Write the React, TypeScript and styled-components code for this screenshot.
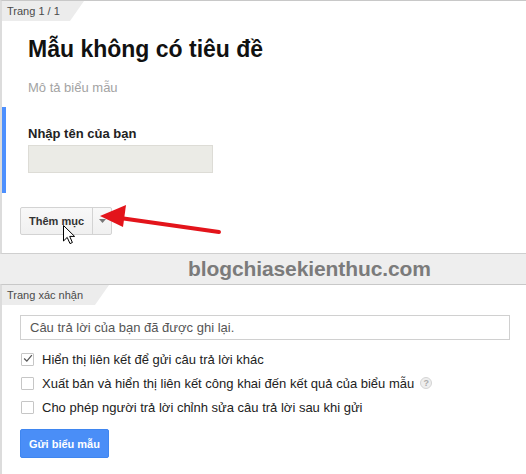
import styled, { createGlobalStyle } from "styled-components";

const GlobalStyle = createGlobalStyle`
  body {
    margin: 0;
    background: #fff;
    font-family: "Liberation Sans", Arial, sans-serif;
  }
  * { box-sizing: border-box; }
`;

const options = [
  { id: 1, label: "Hiển thị liên kết để gửi câu trả lời khác", checked: true },
  { id: 2, label: "Xuất bản và hiển thị liên kết công khai đến kết quả của biểu mẫu", checked: false, help: true },
  { id: 3, label: "Cho phép người trả lời chỉnh sửa câu trả lời sau khi gửi", checked: false },
];

export default function App() {
  return (
    <>
      <GlobalStyle />
      <Page>
        <Panel $bottom>
          <Tab $width={82}>Trang 1 / 1</Tab>
          <Header>
            <Title>Mẫu không có tiêu đề</Title>
            <Description>Mô tả biểu mẫu</Description>
          </Header>
          <Question>
            <Label>Nhập tên của bạn</Label>
            <NameInput />
          </Question>
          <Toolbar>
            <SplitButton>
              <MainPart>Thêm mục</MainPart>
              <Caret>
                <svg width="7" height="4" viewBox="0 0 7 4">
                  <path d="M0 0h7L3.5 4z" fill="#777" />
                </svg>
              </Caret>
            </SplitButton>
          </Toolbar>
        </Panel>

        <Band>
          <Watermark>blogchiasekienthuc.com</Watermark>
        </Band>

        <Panel>
          <Tab $width={107}>Trang xác nhận</Tab>
          <Confirm>
            <MessageBox>Câu trả lời của bạn đã được ghi lại.</MessageBox>
            <Options>
              {options.map((o) => (
                <Option key={o.id}>
                  <Box>
                    {o.checked && (
                      <svg width="13" height="11" viewBox="0 0 13 11">
                        <path d="M1.5 5.5l3.5 3.5 6.5-8" fill="none" stroke="#555" strokeWidth="1.6" />
                      </svg>
                    )}
                  </Box>
                  <span>{o.label}</span>
                  {o.help && <Help>?</Help>}
                </Option>
              ))}
            </Options>
            <Submit>Gửi biểu mẫu</Submit>
          </Confirm>
        </Panel>

        <Arrow width="130" height="40" viewBox="0 0 130 40">
          <line x1="22" y1="13" x2="121" y2="27" stroke="#e3141b" strokeWidth="4" strokeLinecap="round" />
          <path d="M2 11 L28 0 L25 22 Z" fill="#e3141b" />
        </Arrow>

        <Cursor width="13" height="20" viewBox="0 0 13 20">
          <path
            d="M0.5 0.5 V16 L4.2 12.4 L7 18.6 L9.4 17.5 L6.7 11.4 H11.6 Z"
            fill="#fff"
            stroke="#000"
            strokeWidth="1"
            strokeLinejoin="round"
          />
        </Cursor>
      </Page>
    </>
  );
}

const Page = styled.div`
  position: relative;
  width: 526px;
  height: 474px;
  overflow: hidden;
  background: #fff;
`;

const Panel = styled.section<{ $bottom?: boolean }>`
  border-top: 1px solid #c8c8c8;
  border-left: 2px solid #dcdcdc;
  border-bottom: ${({ $bottom }) => ($bottom ? "1px solid #cfcfcf" : "none")};
  background: #fff;
  padding-bottom: ${({ $bottom }) => ($bottom ? "18px" : "20px")};
`;

const Tab = styled.div<{ $width: number }>`
  width: ${({ $width }) => $width}px;
  height: 20px;
  line-height: 20px;
  padding-left: 5px;
  background: #ececec;
  color: #4a4a4a;
  font-size: 11px;
  clip-path: polygon(0 0, 100% 0, calc(100% - 14px) 100%, 0 100%);
`;

const Header = styled.div`
  padding: 15px 26px 0;
`;

const Title = styled.h1`
  margin: 0;
  font-size: 23px;
  line-height: 27px;
  font-weight: bold;
  color: #111;
`;

const Description = styled.div`
  margin-top: 17px;
  font-size: 13px;
  line-height: 16px;
  color: #a3a3a3;
`;

const Question = styled.div`
  margin-top: 11px;
  border-left: 4px solid #4d90fe;
  padding: 19px 0 20px 22px;
`;

const Label = styled.div`
  font-size: 13px;
  line-height: 16px;
  font-weight: bold;
  color: #222;
`;

const NameInput = styled.div`
  margin-top: 3px;
  width: 185px;
  height: 28px;
  background: #ebebe6;
  border: 1px solid #dddcd6;
`;

const Toolbar = styled.div`
  margin-top: 14px;
  padding-left: 18px;
`;

const SplitButton = styled.div`
  display: inline-flex;
  height: 28px;
  border: 1px solid #d3d3d3;
  border-radius: 2px;
  background: linear-gradient(#f8f8f8, #f0f0f0);
`;

const MainPart = styled.div`
  width: 72px;
  display: flex;
  align-items: center;
  justify-content: center;
  font-size: 11px;
  font-weight: bold;
  color: #333;
  border-right: 1px solid #d3d3d3;
`;

const Caret = styled.div`
  width: 18px;
  display: flex;
  align-items: center;
  justify-content: center;
`;

const Band = styled.div`
  height: 30px;
  background: #eeeeee;
  padding-left: 188px;
  display: flex;
  align-items: center;
`;

const Watermark = styled.div`
  font-size: 21px;
  font-weight: bold;
  color: #7b7b7b;
  letter-spacing: -0.1px;
`;

const Confirm = styled.div`
  padding: 10px 14px 0 18px;
`;

const MessageBox = styled.div`
  width: 490px;
  height: 25px;
  border: 1px solid #d0d0d0;
  padding-left: 9px;
  display: flex;
  align-items: center;
  font-size: 13px;
  color: #555;
`;

const Options = styled.div`
  margin-top: 7px;
  display: flex;
  flex-direction: column;
`;

const Option = styled.div`
  height: 24px;
  display: flex;
  align-items: center;
  padding-left: 1px;
  gap: 8px;
  font-size: 13px;
  color: #222;
`;

const Box = styled.div`
  width: 13px;
  height: 13px;
  border: 1px solid #c6c6c6;
  border-radius: 1px;
  background: #fff;
  display: flex;
  align-items: center;
  justify-content: center;
  svg {
    margin-top: -2px;
    margin-left: 1px;
  }
`;

const Help = styled.span`
  width: 12px;
  height: 12px;
  margin-left: -2px;
  border-radius: 50%;
  background: #eee;
  border: 1px solid #d4d4d4;
  color: #aaa;
  font-size: 9px;
  font-weight: bold;
  display: flex;
  align-items: center;
  justify-content: center;
`;

const Submit = styled.button`
  margin-top: 10px;
  width: 89px;
  height: 29px;
  border: 1px solid #3f86f0;
  border-radius: 2px;
  background: #4a8ef7;
  color: #fff;
  font-family: inherit;
  font-size: 11px;
  font-weight: bold;
  padding: 0;
`;

const Arrow = styled.svg`
  position: absolute;
  left: 98px;
  top: 205px;
`;

const Cursor = styled.svg`
  position: absolute;
  left: 63px;
  top: 225px;
`;
